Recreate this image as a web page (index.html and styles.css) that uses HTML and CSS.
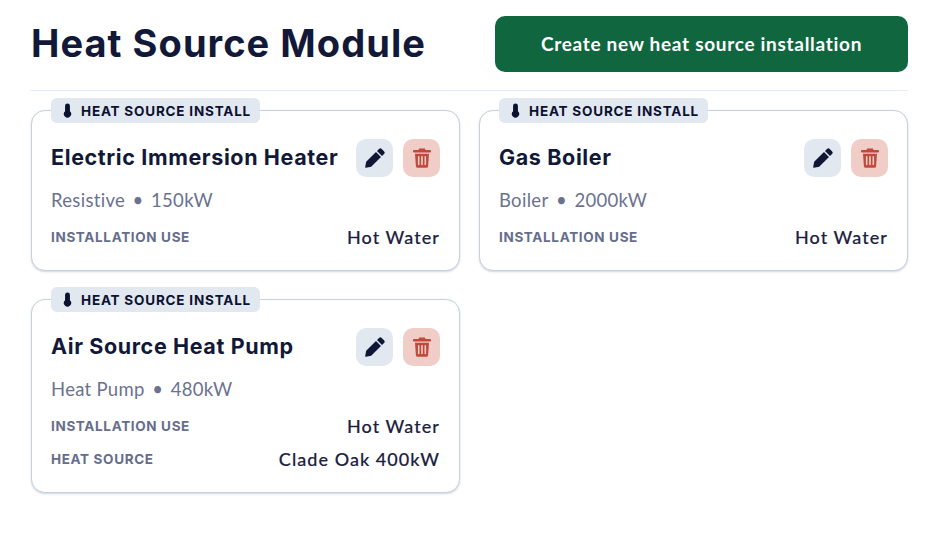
FILE: index.html
```html
<!DOCTYPE html>
<html lang="en">
<head>
<meta charset="utf-8">
<title>Heat Source Module</title>
<link rel="stylesheet" href="styles.css">
</head>
<body>
<svg class="defs" width="0" height="0" aria-hidden="true">
  <symbol id="thermo" viewBox="0 0 10 16"><path d="M5 .2a2.700 2.700 0 0 0-2.700 2.700v6A4 4 0 1 0 7.700 8.900v-6A2.700 2.700 0 0 0 5 .2z" fill="#0b1130"/></symbol>
  <symbol id="pencil" viewBox="0 0 20 20"><path d="M14 1a1.900 1.900 0 0 1 2.700 0l2.300 2.300a1.900 1.900 0 0 1 0 2.700l-2 2-5-5zM11 4l5 5L6.200 18.800.9 19.800a.6.600 0 0 1-.7-.7l1-5.300z" fill="#0f1636"/></symbol>
  <symbol id="trash" viewBox="0 0 18 20"><path d="M6.200.4h5.600l.8 1.700H17a1.100 1.100 0 0 1 0 2.300H1a1.100 1.100 0 0 1 0-2.300h4.400zM2 5.700h14l-.9 12.500a1.800 1.800 0 0 1-1.800 1.600H4.700a1.800 1.800 0 0 1-1.800-1.600zm3.700 2.400a.8.8 0 0 0-.8.8v7.500a.8.8 0 0 0 1.600 0V8.900a.8.8 0 0 0-.8-.8zm3.300 0a.8.8 0 0 0-.8.8v7.500a.8.8 0 0 0 1.600 0V8.900a.8.8 0 0 0-.8-.8zm3.300 0a.8.8 0 0 0-.8.8v7.500a.8.8 0 0 0 1.600 0V8.900a.8.8 0 0 0-.8-.8z" fill="#c0493c" fill-rule="evenodd"/></symbol>
</svg>
<main class="page">
  <header class="top">
    <h1 class="title">Heat Source Module</h1>
    <button class="create">Create new heat source installation</button>
  </header>
  <section class="cards">
    <article class="card">
      <div class="badge"><svg class="i-thermo"><use href="#thermo"/></svg>HEAT SOURCE INSTALL</div>
      <div class="head">
        <h2 class="name">Electric Immersion Heater</h2>
        <div class="actions">
          <button class="act edit"><svg class="i-pencil"><use href="#pencil"/></svg></button>
          <button class="act del"><svg class="i-trash"><use href="#trash"/></svg></button>
        </div>
      </div>
      <p class="meta">Resistive<span class="sep">•</span>150kW</p>
      <div class="row"><span class="label">INSTALLATION USE</span><span class="value">Hot Water</span></div>
    </article>
    <article class="card">
      <div class="badge"><svg class="i-thermo"><use href="#thermo"/></svg>HEAT SOURCE INSTALL</div>
      <div class="head">
        <h2 class="name">Gas Boiler</h2>
        <div class="actions">
          <button class="act edit"><svg class="i-pencil"><use href="#pencil"/></svg></button>
          <button class="act del"><svg class="i-trash"><use href="#trash"/></svg></button>
        </div>
      </div>
      <p class="meta">Boiler<span class="sep">•</span>2000kW</p>
      <div class="row"><span class="label">INSTALLATION USE</span><span class="value">Hot Water</span></div>
    </article>
    <article class="card">
      <div class="badge"><svg class="i-thermo"><use href="#thermo"/></svg>HEAT SOURCE INSTALL</div>
      <div class="head">
        <h2 class="name">Air Source Heat Pump</h2>
        <div class="actions">
          <button class="act edit"><svg class="i-pencil"><use href="#pencil"/></svg></button>
          <button class="act del"><svg class="i-trash"><use href="#trash"/></svg></button>
        </div>
      </div>
      <p class="meta">Heat Pump<span class="sep">•</span>480kW</p>
      <div class="row"><span class="label">INSTALLATION USE</span><span class="value">Hot Water</span></div>
      <div class="row"><span class="label">HEAT SOURCE</span><span class="value">Clade Oak 400kW</span></div>
    </article>
  </section>
</main>
</body>
</html>
```
FILE: styles.css
```css
* { box-sizing: border-box; }
html, body { margin: 0; padding: 0; background: #fff; }
body { width: 940px; height: 539px; overflow: hidden; font-family: "Open Sans", "Liberation Sans", sans-serif; color: #111838; }
.defs { position: absolute; }
.page { padding: 16px 32px 0 31px; }
.top { display: flex; justify-content: space-between; align-items: center; height: 75px; padding-bottom: 19px; border-bottom: 1px solid #e6eafb; margin-left: -1px; }
.title { margin: 0 0 2px 1px; font-family: Inter, sans-serif; font-size: 38px; font-weight: 700; line-height: 54px; color: #111838; letter-spacing: 1.05px; }
.create { width: 413px; height: 56px; border: 0; border-radius: 10px; background: #10673f; color: #fff; font-family: Lato, sans-serif; font-size: 19px; font-weight: 700; letter-spacing: .7px; }
.cards { display: grid; grid-template-columns: 429px 429px; column-gap: 19px; row-gap: 28px; align-items: start; margin-top: 19px; }
.card { position: relative; border: 1.500px solid #c6d0de; border-radius: 14px; padding: 28px 19px 17px; box-shadow: 0 1px 2px rgba(100,116,139,.3); background: #fff; }
.badge { position: absolute; left: 19px; top: -13px; height: 25px; width: 209px; display: flex; align-items: center; gap: 9px; padding-left: 12px; border-radius: 6px; background: #e2e8f0; font-family: Inter, sans-serif; font-size: 13.500px; font-weight: 700; letter-spacing: .8px; color: #0b1130; white-space: nowrap; }
.i-thermo { width: 9px; height: 15px; }
.head { display: flex; justify-content: space-between; align-items: center; height: 38px; }
.name { margin: 0 0 2px; font-family: Inter, sans-serif; font-size: 21.500px; font-weight: 700; letter-spacing: .62px; color: #111838; }
.actions { display: flex; gap: 10px; }
.act { width: 37px; height: 38px; border: 0; border-radius: 10px; padding: 0; display: flex; align-items: center; justify-content: center; }
.edit { background: #e2e8f0; }
.del { background: #f1cdc8; }
.i-pencil { width: 20px; height: 20px; }
.i-trash { width: 18px; height: 20px; }
.meta { margin: 11px 0 0; font-family: Lato, sans-serif; font-size: 18.500px; line-height: 24px; color: #6b7290; letter-spacing: .3px; }
.sep { display: inline-block; width: 26px; text-align: center; }
.row { display: flex; justify-content: space-between; align-items: center; height: 33px; }
.meta + .row { margin-top: 8px; }
.label { font-family: Inter, sans-serif; font-size: 13.500px; font-weight: 700; letter-spacing: .65px; color: #666d8c; }
.value { font-family: Lato, sans-serif; font-size: 18px; font-weight: 500; color: #1b2140; letter-spacing: 1.05px; -webkit-text-stroke: .15px #1b2140; }
```
